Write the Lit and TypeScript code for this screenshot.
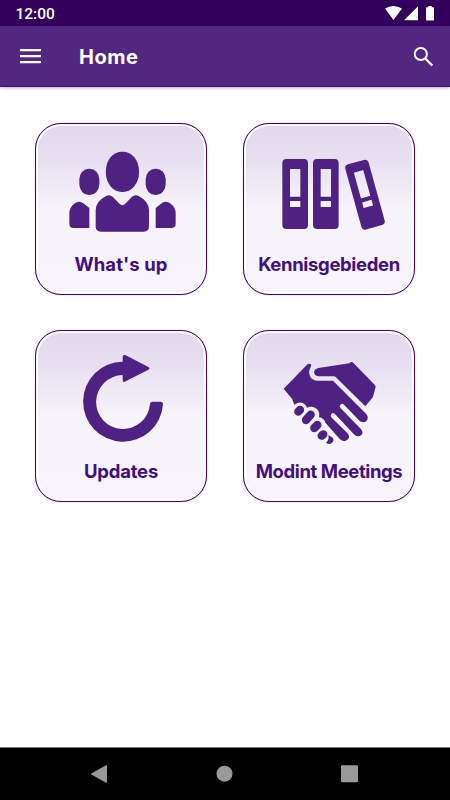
import { LitElement, html, svg, css } from "lit";
import { customElement, property } from "lit/decorators.js";

const people = svg`
  <rect x="227.500" y="101" width="99.500" height="121" rx="48" ry="58"/>
  <rect x="148" y="152" width="60" height="79" rx="29" ry="32"/>
  <rect x="347" y="152" width="60" height="79" rx="29" ry="32"/>
  <path d="M131 330Q118 330 118 317V286Q118 268 133 257Q147 246 162 257L178 270V330Z"/>
  <path d="M423 330Q437 330 437 317V286Q437 268 422 257Q407 246 393 257L377 270V330Z"/>
  <path d="M228 234Q238 228 248 236L269 258Q277 265 285 258L306 236Q316 228 326 234Q357 251 357 276V325Q357 341 341 341H213Q197 341 197 325V276Q197 251 228 234Z"/>`;

const binder = svg`<path fill-rule="evenodd" d="M12 0H65Q77 0 77 12V198Q77 210 65 210H12Q0 210 0 198V12Q0 0 12 0ZM23 30V113H54V30ZM23 126V144H54V126Z"/>`;

const binders = svg`
  <g transform="translate(133 123)">${binder}</g>
  <g transform="translate(225 123)">${binder}</g>
  <g transform="translate(319 142) rotate(-15.500) scale(.94 .965)">${binder}</g>`;

const reload = svg`
  <path d="M278 110V96Q278 87 287 91L355 126Q362 130 355 134L287 169Q278 174 278 165V150A81 81 0 1 0 360 238Q360 230 368 230H391Q399 230 399 238A120 120 0 1 1 278 110Z"/>`;

const handshake = svg`
  <path d="M137 191L207 119Q212 114 219 118Q221 121 218 126Q209 141 217 155Q223 166 238 167H285L384 266Q392 275 388 284Q381 296 366 289L318 239Q312 234 307 239Q303 245 308 250L368 311Q378 322 370 330Q361 338 349 329L291 267Q285 261 280 267Q276 272 281 278L328 324Q337 335 330 343Q319 354 306 343L262 293Q258 279 243 277Q247 255 231 248Q219 243 207 248Q199 231 182 233Q175 234 169 239L162 221Z"/>
  <path d="M241 129L334 115Q341 107 347 115L410 179Q415 184 412 190L405 216L382 244L293 156Q291 154 286 154H241Q228 151 228 141Q229 132 241 129Z"/>
  <g fill="none" stroke="currentColor" stroke-width="25" stroke-linecap="round">
    <path d="M181 260L186 255"/>
    <path d="M204 285L218 269"/>
    <path d="M229 309L238 300"/>
    <path d="M251 332L256 328"/>
  </g>
  <path d="M271 331Q274 346 264 353Q275 361 284 352Q293 339 271 331Z"/>`;

@customElement("status-bar")
class StatusBar extends LitElement {
  static styles = css`
    :host { display: flex; justify-content: space-between; box-sizing: border-box; height: 26px; padding-left: 15.500px; background: #32005c; color: #fff; }
    .clock { font: 500 15.500px/28px Roboto, sans-serif; }
    svg { display: block; width: 65px; height: 26px; fill: #fff; }
  `;
  render() {
    return html`<span class="clock">12:00</span>
      <svg viewBox="385 0 65 26">
        <path d="M385 8.600Q393.400 3.200 402 8.600L393.500 20Z"/>
        <path d="M418 6.300V20.300H404Z"/>
        <path d="M428.300 6H431.700V7.300H433.200Q434 7.300 434 8.100V19.700Q434 20.500 433.200 20.500H426.800Q426 20.500 426 19.700V8.100Q426 7.300 426.800 7.300H428.300Z"/>
      </svg>`;
  }
}

@customElement("title-bar")
class TitleBar extends LitElement {
  static styles = css`
    :host { display: flex; align-items: center; box-sizing: border-box; height: 61px; padding: 0 16px 0 20px; background: #52277f; color: #fff; border-bottom: 1px solid #3d0a72; box-shadow: 0 1px 3px rgba(0, 0, 0, .28); }
    .menu { width: 21px; height: 16px; }
    .search { width: 21px; height: 21px; }
    .title { flex: 1; margin-left: 38px; padding-top: 1px; font: 700 20px/30px Inter, sans-serif; letter-spacing: .5px; }
    svg { display: block; }
  `;
  render() {
    return html`
      <svg class="menu" viewBox="0 0 21 16" fill="#fff"><path d="M0 1H21V3.300H0ZM0 7H21V9.300H0ZM0 13H21V15.300H0Z"/></svg>
      <span class="title">Home</span>
      <svg class="search" viewBox="0 0 21 21" fill="none" stroke="#fff"><circle cx="7.800" cy="8" r="6.100" stroke-width="2"/><path d="M12.300 12.500L19.300 19.500" stroke-width="2.400"/></svg>`;
  }
}

@customElement("home-tile")
class HomeTile extends LitElement {
  @property() label = "";
  @property({ type: Number }) spacing = 0;
  @property({ attribute: false }) icon: unknown;
  static styles = css`
    :host { display: block; box-sizing: border-box; width: 172px; height: 172px; padding: 2px; border: 1px solid #3f0080; border-radius: 26px; background: #fff; color: #4f2182; box-shadow: 0 0 1px rgba(63, 0, 128, .5); }
    .face { height: 166px; overflow: hidden; border-radius: 23px; background: linear-gradient(#e2d9ed, #e8e0f1 22%, #f6f3fb 48%, #f7f4fc); }
    .icon { display: block; width: 166px; height: 125px; fill: currentColor; }
    .label { display: flex; justify-content: center; font: 700 18.500px/27px Inter, sans-serif; white-space: nowrap; color: #430f80; }
  `;
  render() {
    return html`<div class="face">
      <svg class="icon" viewBox="24 24 498 375">${this.icon}</svg>
      <div class="label"><span style="letter-spacing:${this.spacing}px">${this.label}</span></div>
    </div>`;
  }
}

@customElement("nav-bar")
class NavBar extends LitElement {
  static styles = css`
    :host { display: flex; align-items: center; justify-content: space-between; box-sizing: border-box; height: 53px; padding: 0 92px 0 91px; background: #000; border-top: 1px solid #777; }
    svg { display: block; width: 17px; height: 18px; fill: #999; }
  `;
  render() {
    return html`
      <svg viewBox="0 0 17 18"><path d="M.3 8.400Q-.2 9 .3 9.500L15 17.700Q16 18 16 17V1Q16 0 15 .3Z"/></svg>
      <svg viewBox="0 0 17 18"><circle cx="8.500" cy="8.700" r="8"/></svg>
      <svg viewBox="0 0 17 18"><rect y=".3" width="17" height="17" rx="1.300"/></svg>`;
  }
}

@customElement("app-root")
class AppRoot extends LitElement {
  static styles = css`
    :host { display: flex; flex-direction: column; height: 800px; background: #fff; }
    .content { flex: 1; display: grid; grid-template-columns: 172px 172px; grid-auto-rows: 172px; gap: 35px 36px; align-content: start; padding: 36px 35px; }
  `;
  render() {
    return html`
      <status-bar></status-bar>
      <title-bar></title-bar>
      <main class="content">
        <home-tile label="What's up" .spacing=${0.1} .icon=${people}></home-tile>
        <home-tile label="Kennisgebieden" .spacing=${-0.35} .icon=${binders}></home-tile>
        <home-tile label="Updates" .spacing=${-0.2} .icon=${reload}></home-tile>
        <home-tile label="Modint Meetings" .spacing=${-0.4} .icon=${handshake}></home-tile>
      </main>
      <nav-bar></nav-bar>`;
  }
}
